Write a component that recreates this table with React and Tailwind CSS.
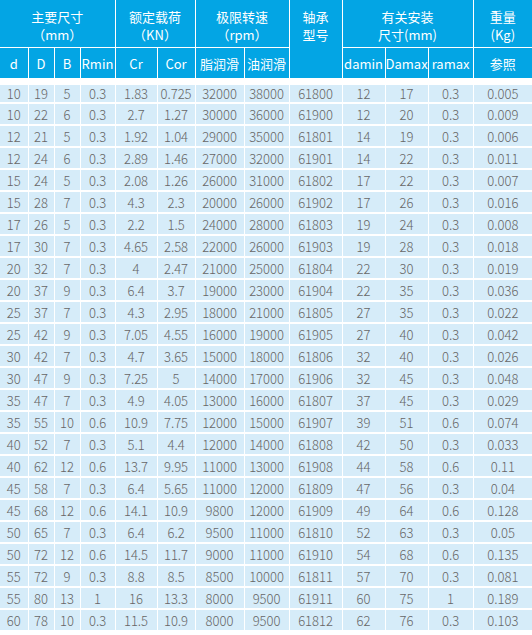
import React from "react";

const widths = [28, 26, 26, 35, 42, 38, 49, 45, 53, 43, 43, 45, 59];

const rows = [
  ["10", "19", "5", "0.3", "1.83", "0.725", "32000", "38000", "61800", "12", "17", "0.3", "0.005"],
  ["10", "22", "6", "0.3", "2.7", "1.27", "30000", "36000", "61900", "12", "20", "0.3", "0.009"],
  ["12", "21", "5", "0.3", "1.92", "1.04", "29000", "35000", "61801", "14", "19", "0.3", "0.006"],
  ["12", "24", "6", "0.3", "2.89", "1.46", "27000", "32000", "61901", "14", "22", "0.3", "0.011"],
  ["15", "24", "5", "0.3", "2.08", "1.26", "26000", "31000", "61802", "17", "22", "0.3", "0.007"],
  ["15", "28", "7", "0.3", "4.3", "2.3", "20000", "26000", "61902", "17", "26", "0.3", "0.016"],
  ["17", "26", "5", "0.3", "2.2", "1.5", "24000", "28000", "61803", "19", "24", "0.3", "0.008"],
  ["17", "30", "7", "0.3", "4.65", "2.58", "22000", "26000", "61903", "19", "28", "0.3", "0.018"],
  ["20", "32", "7", "0.3", "4", "2.47", "21000", "25000", "61804", "22", "30", "0.3", "0.019"],
  ["20", "37", "9", "0.3", "6.4", "3.7", "19000", "23000", "61904", "22", "35", "0.3", "0.036"],
  ["25", "37", "7", "0.3", "4.3", "2.95", "18000", "21000", "61805", "27", "35", "0.3", "0.022"],
  ["25", "42", "9", "0.3", "7.05", "4.55", "16000", "19000", "61905", "27", "40", "0.3", "0.042"],
  ["30", "42", "7", "0.3", "4.7", "3.65", "15000", "18000", "61806", "32", "40", "0.3", "0.026"],
  ["30", "47", "9", "0.3", "7.25", "5", "14000", "17000", "61906", "32", "45", "0.3", "0.048"],
  ["35", "47", "7", "0.3", "4.9", "4.05", "13000", "16000", "61807", "37", "45", "0.3", "0.029"],
  ["35", "55", "10", "0.6", "10.9", "7.75", "12000", "15000", "61907", "39", "51", "0.6", "0.074"],
  ["40", "52", "7", "0.3", "5.1", "4.4", "12000", "14000", "61808", "42", "50", "0.3", "0.033"],
  ["40", "62", "12", "0.6", "13.7", "9.95", "11000", "13000", "61908", "44", "58", "0.6", "0.11"],
  ["45", "58", "7", "0.3", "6.4", "5.65", "11000", "12000", "61809", "47", "56", "0.3", "0.04"],
  ["45", "68", "12", "0.6", "14.1", "10.9", "9800", "12000", "61909", "49", "64", "0.6", "0.128"],
  ["50", "65", "7", "0.3", "6.4", "6.2", "9500", "11000", "61810", "52", "63", "0.3", "0.05"],
  ["50", "72", "12", "0.6", "14.5", "11.7", "9000", "11000", "61910", "54", "68", "0.6", "0.135"],
  ["55", "72", "9", "0.3", "8.8", "8.5", "8500", "10000", "61811", "57", "70", "0.3", "0.081"],
  ["55", "80", "13", "1", "16", "13.3", "8000", "9500", "61911", "60", "75", "1", "0.189"],
  ["60", "78", "10", "0.3", "11.5", "10.9", "8000", "9500", "61812", "62", "76", "0.3", "0.103"],
];

const head = "bg-[#03a5e4] text-white font-normal border border-white p-0";

export default function App() {
  return (
    <div className="w-[532px] bg-white font-['Noto_Sans_CJK_SC','Noto_Sans',sans-serif]">
      <table className="w-[532px] table-fixed border-collapse">
        <colgroup>
          {widths.map((w, i) => (
            <col key={i} style={{ width: w }} />
          ))}
        </colgroup>
        <thead className="text-[13px] leading-[18px]">
          <tr className="h-[47px]">
            <th colSpan={4} className={`${head} border-l-0 border-t-0 align-top pt-[8px]`}>
              主要尺寸<br />（mm）
            </th>
            <th colSpan={2} className={`${head} border-t-0 align-top pt-[8px]`}>
              额定载荷<br />（KN）
            </th>
            <th colSpan={2} className={`${head} border-t-0 align-top pt-[8px]`}>
              极限转速<br />（rpm）
            </th>
            <th rowSpan={2} className={`${head} border-t-0 border-b-[7px] align-top pt-[8px]`}>
              轴承<br />型号
            </th>
            <th colSpan={3} className={`${head} border-t-0 align-top pt-[8px]`}>
              有关安装<br />尺寸(mm)
            </th>
            <th className={`${head} border-r-0 border-t-0 align-top pt-[8px]`}>
              重量<br />(Kg)
            </th>
          </tr>
          <tr className="h-[34px]">
            {["d", "D", "B", "Rmin", "Cr", "Cor", "脂润滑", "油润滑"].map((t, i) => (
              <th key={t} className={`${head} border-b-[7px] align-middle pt-[2px] ${i === 0 ? "border-l-0" : ""}`}>
                {t}
              </th>
            ))}
            {["damin", "Damax", "ramax", "参照"].map((t, i) => (
              <th key={t} className={`${head} border-b-[7px] align-middle pt-[2px] ${i === 3 ? "border-r-0" : ""}`}>
                {t}
              </th>
            ))}
          </tr>
        </thead>
        <tbody className="text-[13px] text-[#666] font-light">
          {rows.map((r, ri) => (
            <tr key={ri} className="h-[22px]">
              {r.map((v, ci) => (
                <td
                  key={ci}
                  className={`bg-[#d6ecf9] border-x border-y-2 border-white p-0 text-center leading-none ${ci === 0 ? "border-l-0" : ""} ${ci === 12 ? "border-r-0" : ""}`}
                >
                  {v}
                </td>
              ))}
            </tr>
          ))}
        </tbody>
      </table>
    </div>
  );
}
